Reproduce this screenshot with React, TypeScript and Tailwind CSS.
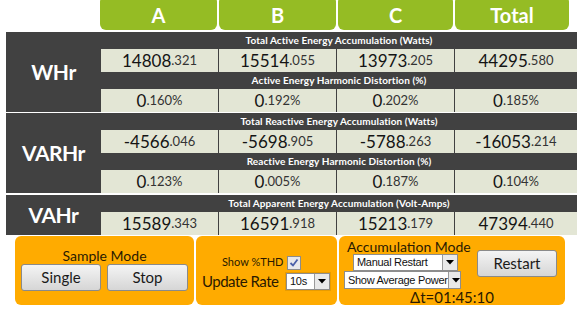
import React from "react";

type Val = [string, string];

const COLS = ["w-[117px]", "w-[117px]", "w-[117px]", "w-[122px]"];

function Cells({ vals }: { vals: Val[] }) {
  return (
    <div className="flex gap-[1px] h-[23px]">
      {vals.map((v, i) => (
        <div
          key={i}
          className={`${COLS[i]} bg-[#e3e6d5] flex items-center justify-center text-[#141414] leading-none whitespace-nowrap`}
        >
          <span className="text-[17px]">{v[0]}</span>
          <span className="text-[13px] text-[#333]">{v[1]}</span>
        </div>
      ))}
    </div>
  );
}

function Sub({ text }: { text: string }) {
  return (
    <div className="h-[17px] flex items-center justify-center text-[10px] font-bold text-white whitespace-nowrap tracking-[0.1px]">
      {text}
    </div>
  );
}

function Section({
  label,
  rows,
}: {
  label: string;
  rows: { title: string; vals: Val[] }[];
}) {
  return (
    <div className="flex bg-[#414141]">
      <div className="w-[95px] flex items-center justify-center text-white font-bold text-[21px] tracking-[-0.5px]">
        {label}
      </div>
      <div className="flex flex-col">
        {rows.map((r) => (
          <div key={r.title}>
            <Sub text={r.title} />
            <Cells vals={r.vals} />
          </div>
        ))}
      </div>
    </div>
  );
}

function Btn({ text, w }: { text: string; w: string }) {
  return (
    <div
      className={`${w} h-[27px] shrink-0 rounded-[3px] border border-[#8a8a8a] bg-gradient-to-b from-[#f4f4f4] to-[#d6d6d6] flex items-center justify-center text-[15px] text-[#1a1a1a]`}
    >
      {text}
    </div>
  );
}

function Select({ text, w, h }: { text: string; w: string; h: string }) {
  return (
    <div
      className={`${w} ${h} shrink-0 bg-white border border-[#8d8d8d] flex items-center justify-between font-['Liberation_Sans',sans-serif] text-[11px] tracking-[-0.3px] text-[#111] pl-[3px] whitespace-nowrap overflow-hidden`}
    >
      <span>{text}</span>
      <div className="w-[15px] h-full shrink-0 border-l border-[#9a9a9a] bg-[#e9e9e9] flex items-center justify-center">
        <svg width="8" height="5" viewBox="0 0 8 5">
          <path d="M0 0h8L4 4.5z" fill="#000" />
        </svg>
      </div>
    </div>
  );
}

export default function App() {
  return (
    <div className="w-[579px] h-[310px] bg-white overflow-hidden font-['Lato','Open_Sans',sans-serif]">
      <div className="flex gap-[2px] pl-[100px] -mt-[4px]">
        {[
          ["A", "w-[117px]"],
          ["B", "w-[117px]"],
          ["C", "w-[115px]"],
          ["Total", "w-[114px]"],
        ].map(([t, w]) => (
          <div
            key={t}
            className={`${w} h-[34px] pt-[4px] rounded-[6px] bg-[#95bc24] flex items-center justify-center text-white font-bold text-[20px]`}
          >
            {t}
          </div>
        ))}
      </div>

      <div className="ml-[6px] mt-[2px] w-[571px] flex flex-col">
        <Section
          label="WHr"
          rows={[
            {
              title: "Total Active Energy Accumulation (Watts)",
              vals: [
                ["14808", ".321"],
                ["15514", ".055"],
                ["13973", ".205"],
                ["44295", ".580"],
              ],
            },
            {
              title: "Active Energy Harmonic Distortion (%)",
              vals: [
                ["0", ".160%"],
                ["0", ".192%"],
                ["0", ".202%"],
                ["0", ".185%"],
              ],
            },
          ]}
        />
        <div className="h-[1px]" />
        <Section
          label="VARHr"
          rows={[
            {
              title: "Total Reactive Energy Accumulation (Watts)",
              vals: [
                ["-4566", ".046"],
                ["-5698", ".905"],
                ["-5788", ".263"],
                ["-16053", ".214"],
              ],
            },
            {
              title: "Reactive Energy Harmonic Distortion (%)",
              vals: [
                ["0", ".123%"],
                ["0", ".005%"],
                ["0", ".187%"],
                ["0", ".104%"],
              ],
            },
          ]}
        />
        <div className="h-[2px]" />
        <Section
          label="VAHr"
          rows={[
            {
              title: "Total Apparent Energy Accumulation (Volt-Amps)",
              vals: [
                ["15589", ".343"],
                ["16591", ".918"],
                ["15213", ".179"],
                ["47394", ".440"],
              ],
            },
          ]}
        />
      </div>

      <div className="flex gap-[2px] ml-[15px] mt-[1px] text-[#2a1a00] whitespace-nowrap">
        <div className="w-[179px] h-[69px] rounded-[6px] bg-[#ffab00] flex flex-col items-center pt-[11px]">
          <div className="text-[14px] leading-[17px]">Sample Mode</div>
          <div className="flex gap-[6px]">
            <Btn text="Single" w="w-[80px]" />
            <Btn text="Stop" w="w-[81px]" />
          </div>
        </div>

        <div className="w-[141px] h-[69px] rounded-[6px] bg-[#ffab00] flex flex-col pt-[19px]">
          <div className="flex items-center pl-[26px] h-[15px]">
            <span className="text-[11px]">Show %THD</span>
            <div className="ml-[4px] w-[14px] h-[14px] border border-[#8c8c8c] bg-[#e8e8ec] flex items-center justify-center">
              <svg width="10" height="10" viewBox="0 0 10 10">
                <path d="M1.5 5l2.5 2.5 4.5-6" stroke="#4a5fa8" strokeWidth="1.8" fill="none" />
              </svg>
            </div>
          </div>
          <div className="flex items-center pl-[6px] mt-[2px]">
            <span className="w-[83px] text-[15px] tracking-[-0.5px] leading-[19px]">Update Rate</span>
            <div className="p-[1px] bg-[#e89b00]">
              <Select text="10s" w="w-[44px]" h="h-[17px]" />
            </div>
          </div>
        </div>

        <div className="w-[226px] h-[69px] rounded-[6px] bg-[#ffab00] flex flex-col">
          <div className="flex">
            <div className="flex flex-col w-[124px] shrink-0">
              <div className="pl-[8px] pt-[2px] text-[14px] leading-[17px]">Accumulation Mode</div>
              <div className="pl-[14px] -mt-[1px]">
                <Select text="Manual Restart" w="w-[105px]" h="h-[17px]" />
              </div>
              <div className="pl-[5px]">
                <Select text="Show Average Power" w="w-[117px]" h="h-[18px]" />
              </div>
            </div>
            <div className="ml-[14px] mt-[14px]">
              <Btn text="Restart" w="w-[80px]" />
            </div>
          </div>
          <div className="text-center text-[15px] leading-[17px]">Δt=01:45:10</div>
        </div>
      </div>
    </div>
  );
}
